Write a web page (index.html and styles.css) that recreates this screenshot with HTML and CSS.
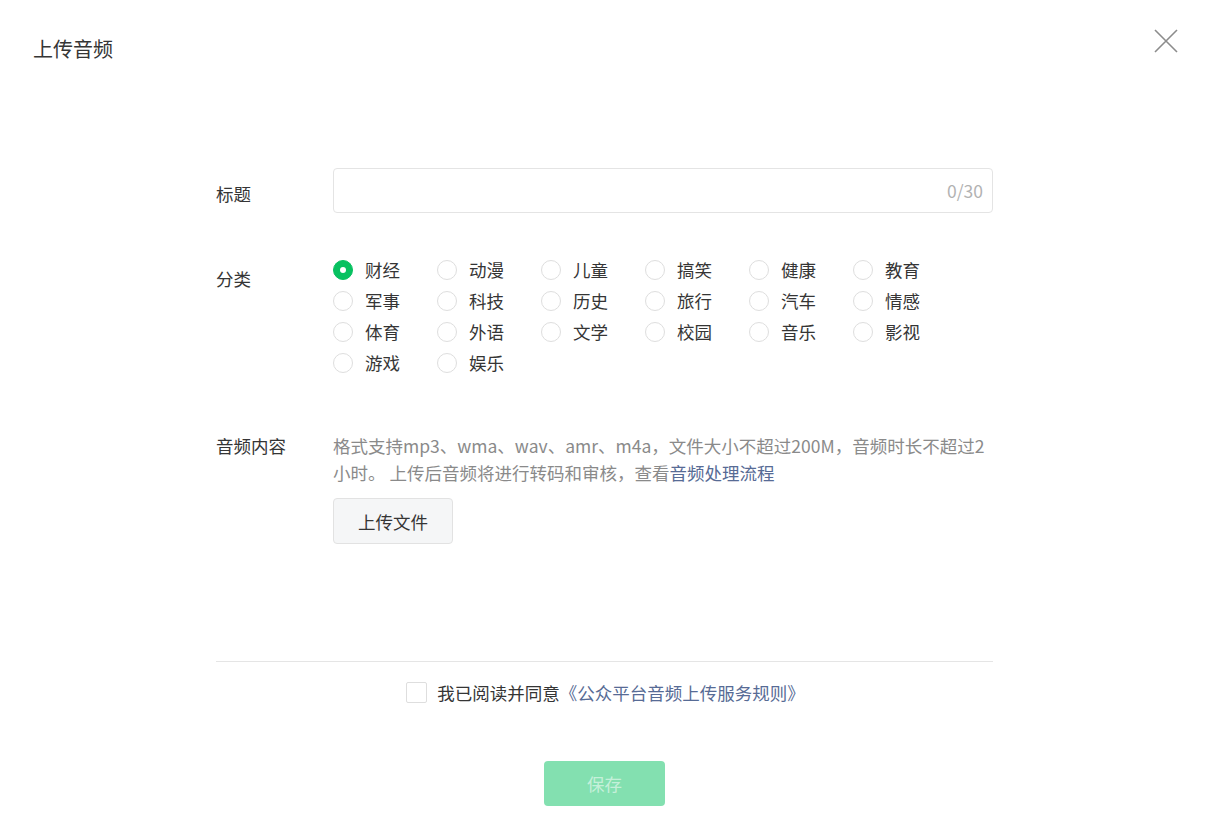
FILE: index.html
```html
<!DOCTYPE html>
<html lang="zh-CN">
<head>
  <meta charset="UTF-8" />
  <meta name="viewport" content="width=device-width, initial-scale=1.0"/>
  <title>上传音频</title>
  <link rel="stylesheet" href="styles.css">
</head>
<body>
  <div class="dialog">
    <div class="dialog-hd">
      <h3 class="dialog-title">上传音频</h3>
      <button class="close-btn" aria-label="关闭">
        <svg width="24" height="24" viewBox="0 0 24 24">
          <path d="M1 1L23 23M23 1L1 23" stroke="#8c8c8c" stroke-width="1.6" fill="none"/>
        </svg>
      </button>
    </div>

    <form class="form">
      <!-- 标题 -->
      <div class="form-row row-title">
        <label class="form-label">标题</label>
        <div class="form-ctrl">
          <div class="input-box">
            <input type="text" class="input" maxlength="30">
            <span class="counter">0/30</span>
          </div>
        </div>
      </div>

      <!-- 分类 -->
      <div class="form-row row-cat">
        <label class="form-label">分类</label>
        <div class="form-ctrl radio-grid">
          <label class="radio checked"><i class="radio-icon"></i>财经</label>
          <label class="radio"><i class="radio-icon"></i>动漫</label>
          <label class="radio"><i class="radio-icon"></i>儿童</label>
          <label class="radio"><i class="radio-icon"></i>搞笑</label>
          <label class="radio"><i class="radio-icon"></i>健康</label>
          <label class="radio"><i class="radio-icon"></i>教育</label>
          <label class="radio"><i class="radio-icon"></i>军事</label>
          <label class="radio"><i class="radio-icon"></i>科技</label>
          <label class="radio"><i class="radio-icon"></i>历史</label>
          <label class="radio"><i class="radio-icon"></i>旅行</label>
          <label class="radio"><i class="radio-icon"></i>汽车</label>
          <label class="radio"><i class="radio-icon"></i>情感</label>
          <label class="radio"><i class="radio-icon"></i>体育</label>
          <label class="radio"><i class="radio-icon"></i>外语</label>
          <label class="radio"><i class="radio-icon"></i>文学</label>
          <label class="radio"><i class="radio-icon"></i>校园</label>
          <label class="radio"><i class="radio-icon"></i>音乐</label>
          <label class="radio"><i class="radio-icon"></i>影视</label>
          <label class="radio"><i class="radio-icon"></i>游戏</label>
          <label class="radio"><i class="radio-icon"></i>娱乐</label>
        </div>
      </div>

      <!-- 音频内容 -->
      <div class="form-row row-audio">
        <label class="form-label">音频内容</label>
        <div class="form-ctrl">
          <p class="tips">格式支持mp3、wma、wav、amr、m4a，文件大小不超过200M，音频时长不超过2小时。 上传后音频将进行转码和审核，查看<a href="#" class="link">音频处理流程</a></p>
          <button type="button" class="btn-upload">上传文件</button>
        </div>
      </div>

      <div class="divider"></div>

      <div class="agree">
        <i class="checkbox"></i>
        <span>我已阅读并同意</span><a href="#" class="link">《公众平台音频上传服务规则》</a>
      </div>

      <div class="ft">
        <button type="button" class="btn-save" disabled>保存</button>
      </div>
    </form>
  </div>
</body>
</html>
```

FILE: styles.css
```css
* {
  box-sizing: border-box;
  margin: 0;
  padding: 0;
}

body {
  font-family: "Noto Sans CJK SC", "Noto Sans", sans-serif;
  font-size: 17.5px;
  color: #353535;
  background: #fff;
}

.dialog {
  width: 1219px;
  height: 828px;
}

.dialog-hd {
  height: 80px;
  display: flex;
  justify-content: space-between;
  align-items: flex-start;
  padding: 0 41px 0 33px;
}

.dialog-title {
  font-size: 20px;
  font-weight: normal;
  line-height: 28px;
  margin-top: 35px;
  color: #353535;
}

.close-btn {
  border: 0;
  background: none;
  width: 24px;
  height: 24px;
  margin-top: 29px;
  cursor: pointer;
}

.close-btn svg {
  display: block;
}

.form {
  width: 777px;
  margin: 88px 0 0 216px;
}

.form-row {
  display: flex;
}

.form-label {
  width: 117px;
  flex-shrink: 0;
  line-height: 24px;
}

.form-ctrl {
  width: 660px;
}

/* 标题 */
.row-title .form-label {
  padding-top: 14px;
}

.input-box {
  height: 45px;
  border: 1px solid #e4e4e4;
  border-radius: 4px;
  display: flex;
  align-items: center;
  padding: 0 9px 0 12px;
}

.input {
  flex: 1;
  border: 0;
  outline: none;
  font: inherit;
  color: #353535;
  background: transparent;
}

.counter {
  color: #b2b2b2;
  margin-top: -1px;
}

/* 分类 */
.row-cat {
  margin-top: 41px;
}

.row-cat .form-label {
  padding-top: 13px;
}

.radio-grid {
  display: grid;
  grid-template-columns: repeat(6, 104px);
  grid-auto-rows: 31px;
}

.radio {
  display: flex;
  align-items: center;
  line-height: 31px;
  cursor: pointer;
}

.radio-icon {
  width: 20px;
  height: 20px;
  border: 1px solid #dedede;
  border-radius: 50%;
  margin-right: 12px;
  position: relative;
  flex-shrink: 0;
}

.radio.checked .radio-icon {
  background: #07c160;
  border-color: #07c160;
}

.radio.checked .radio-icon::after {
  content: "";
  position: absolute;
  left: 6px;
  top: 6px;
  width: 6px;
  height: 6px;
  border-radius: 50%;
  background: #fff;
}

/* 音频内容 */
.row-audio {
  margin-top: 54px;
}

.row-audio .form-label {
  line-height: 27px;
}

.tips {
  color: #8a8a8a;
  line-height: 27px;
  word-break: break-all;
}

.link {
  color: #576b95;
  text-decoration: none;
}

.btn-upload {
  margin-top: 12px;
  width: 120px;
  height: 46px;
  border: 1px solid #e2e2e2;
  border-radius: 4px;
  background: #f5f6f7;
  font: inherit;
  color: #353535;
  cursor: pointer;
}

.divider {
  margin-top: 117px;
  height: 1px;
  background: #e5e5e5;
}

.agree {
  margin-top: 15px;
  height: 30px;
  display: flex;
  align-items: center;
  justify-content: center;
  padding-left: 2px;
}

.checkbox {
  width: 21px;
  height: 21px;
  border: 1px solid #dedede;
  border-radius: 2px;
  margin-right: 10px;
}

.ft {
  margin-top: 54px;
  display: flex;
  justify-content: center;
}

.btn-save {
  width: 121px;
  height: 45px;
  border: 0;
  border-radius: 4px;
  background: #83e0b0;
  color: rgba(255, 255, 255, 0.55);
  font: inherit;
}
```
